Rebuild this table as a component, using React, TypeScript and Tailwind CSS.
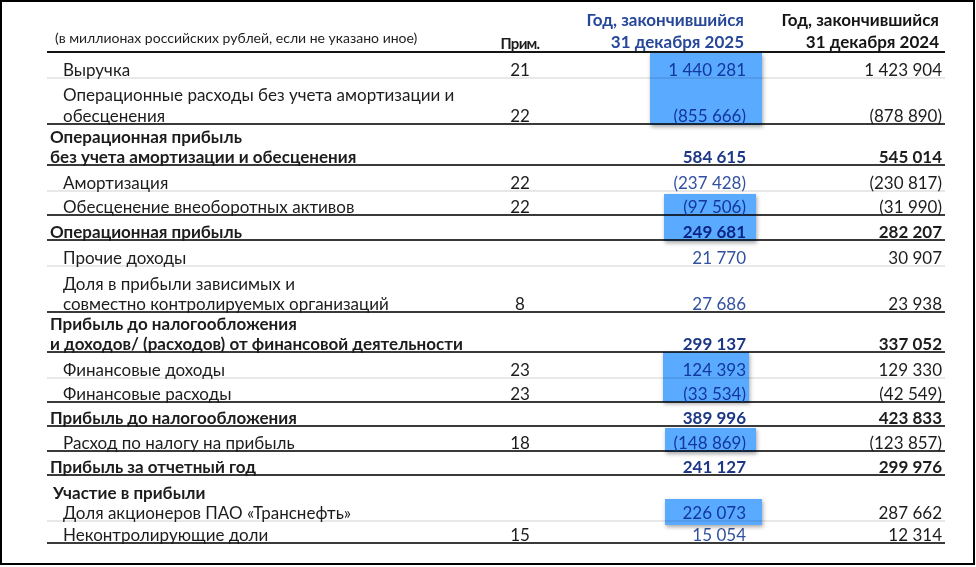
type Row = {
  label: string[];
  note?: string;
  cur?: string;
  prev?: string;
  bold?: boolean;
  h: string;
  line: "light" | "dark" | "none";
  indent?: string;
  leading?: string;
};

const rows: Row[] = [
  { label: ["Выручка"], note: "21", cur: "1 440 281", prev: "1 423 904", h: "h-[26px]", line: "light" },
  {
    label: ["Операционные расходы без учета амортизации и", "обесценения"],
    note: "22",
    cur: "(855 666)",
    prev: "(878 890)",
    h: "h-[46px]",
    line: "dark",
    leading: "leading-[21px]",
  },
  {
    label: ["Операционная прибыль", "без учета амортизации и обесценения"],
    cur: "584 615",
    prev: "545 014",
    bold: true,
    h: "h-[41px]",
    line: "dark",
  },
  { label: ["Амортизация"], note: "22", cur: "(237 428)", prev: "(230 817)", h: "h-[26px]", line: "light" },
  { label: ["Обесценение внеоборотных активов"], note: "22", cur: "(97 506)", prev: "(31 990)", h: "h-[24px]", line: "dark" },
  { label: ["Операционная прибыль"], cur: "249 681", prev: "282 207", bold: true, h: "h-[25px]", line: "dark" },
  { label: ["Прочие доходы"], cur: "21 770", prev: "30 907", h: "h-[26px]", line: "light" },
  {
    label: ["Доля в прибыли зависимых и", "совместно контролируемых организаций"],
    note: "8",
    cur: "27 686",
    prev: "23 938",
    h: "h-[46px]",
    line: "dark",
  },
  {
    label: ["Прибыль до налогообложения", "и доходов/ (расходов) от финансовой деятельности"],
    cur: "299 137",
    prev: "337 052",
    bold: true,
    h: "h-[40px]",
    line: "dark",
  },
  { label: ["Финансовые доходы"], note: "23", cur: "124 393", prev: "129 330", h: "h-[26px]", line: "light" },
  { label: ["Финансовые расходы"], note: "23", cur: "(33 534)", prev: "(42 549)", h: "h-[24px]", line: "dark" },
  { label: ["Прибыль до налогообложения"], cur: "389 996", prev: "423 833", bold: true, h: "h-[24px]", line: "dark" },
  { label: ["Расход по налогу на прибыль"], note: "18", cur: "(148 869)", prev: "(123 857)", h: "h-[25px]", line: "dark" },
  { label: ["Прибыль за отчетный год"], cur: "241 127", prev: "299 976", bold: true, h: "h-[24px]", line: "dark" },
  { label: ["Участие в прибыли"], bold: true, h: "h-[24px]", line: "none", indent: "pl-[6px]" },
  { label: ["Доля акционеров ПАО «Транснефть»"], cur: "226 073", prev: "287 662", h: "h-[22px]", line: "light" },
  { label: ["Неконтролирующие доли"], note: "15", cur: "15 054", prev: "12 314", h: "h-[22px]", line: "dark" },
];

// highlight marks laid over the current-year column
const marks = [
  "left-[648px] top-[51px] w-[112px] h-[72px]",
  "left-[662px] top-[192px] w-[92px] h-[47px]",
  "left-[661px] top-[350px] w-[86px] h-[50px]",
  "left-[663px] top-[426px] w-[91px] h-[24px]",
  "left-[663px] top-[497px] w-[97px] h-[26px]",
];

const cols = "grid grid-cols-[440px_66px_193px_199px]";

const lineCls = {
  light: "border-b-2 border-[#e8e8e8]",
  dark: "border-b-2 border-[#3a3a3a]",
  none: "",
};

export default function App() {
  return (
    <div className="relative w-[975px] h-[565px] border-2 border-black bg-white pl-[45px] font-['Lato',sans-serif] text-[17px] text-[#1c1c1c]">
      <div className="w-[898px]">
        <div className={`${cols} h-[51px] items-end border-b-2 border-[#151515]`}>
          <div className="pl-[8px] -mb-[1px] pb-[4px] text-[14px] leading-5 text-[#222]">
            (в миллионах российских рублей, если не указано иное)
          </div>
          <div className="text-center -mb-[2px] text-[15px] leading-5 font-bold tracking-[-0.05em]">Прим.</div>
          <div className="text-right -mb-[2px] pr-[2px] font-bold leading-[22px] text-[#27479a]">
            <div>Год, закончившийся</div>
            <div>31 декабря 2025</div>
          </div>
          <div className="text-right -mb-[2px] pr-[6px] font-bold leading-[22px] text-[#151515]">
            <div>Год, закончившийся</div>
            <div>31 декабря 2024</div>
          </div>
        </div>

        {rows.map((r, i) => (
          <div key={i} className={`${cols} ${r.h} items-end ${lineCls[r.line]} ${r.bold ? "font-bold" : ""}`}>
            <div
              className={`${r.indent ?? (r.bold ? "pl-[3px]" : "pl-[16px]")} ${
                r.leading ?? "leading-5"
              } -mb-[3px] whitespace-nowrap`}
            >
              {r.label.map((l) => (
                <div key={l}>{l}</div>
              ))}
            </div>
            <div className="text-center leading-5 -mb-[3px]">{r.note}</div>
            <div className={`text-right leading-5 -mb-[3px] ${r.bold ? "text-[#1c3786]" : "text-[#3251a0]"}`}>{r.cur}</div>
            <div className="text-right pr-[3px] leading-5 -mb-[3px]">{r.prev}</div>
          </div>
        ))}
      </div>

      {marks.map((m) => (
        <div
          key={m}
          className={`absolute ${m} bg-[#5aabff] mix-blend-multiply shadow-[1px_2px_4px_rgba(0,0,0,0.35)]`}
        />
      ))}
    </div>
  );
}
